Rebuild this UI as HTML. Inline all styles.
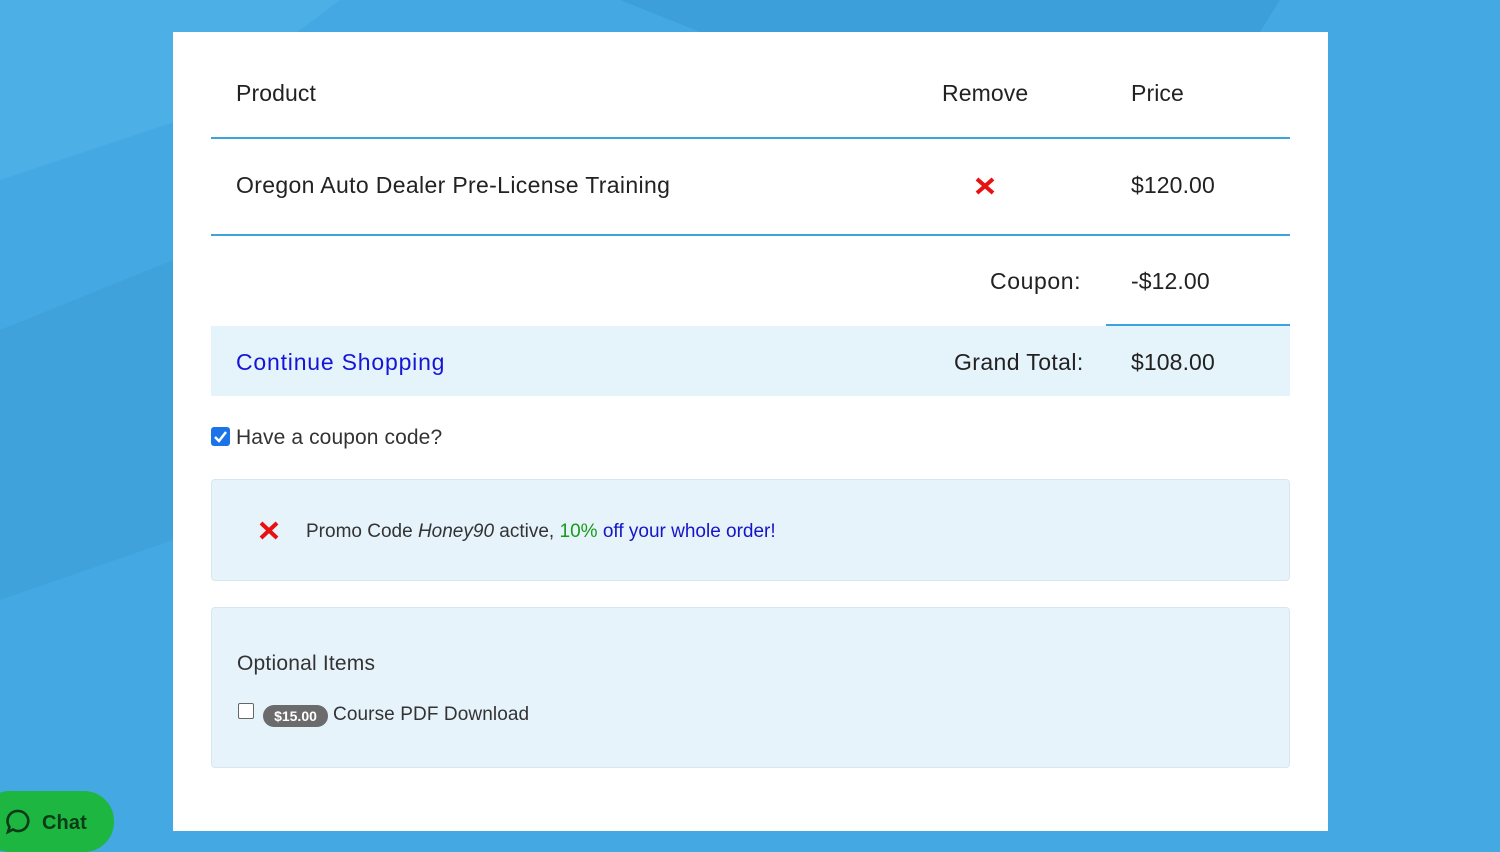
<!DOCTYPE html>
<html><head><style>
body{margin:0;width:1500px;height:852px;overflow:hidden;background:#44a9e2;font-family:"Liberation Sans",sans-serif;position:relative}
.bg{position:absolute;inset:0}
.card{position:absolute;left:173px;top:32px;width:1155px;height:799px;background:#fff}
.t{position:absolute;font-size:23px;color:#222;white-space:nowrap;letter-spacing:0.1px}
.line{position:absolute;height:2px;background:#3aa4dc}
.box{position:absolute;background:#e6f3fb;border:1px solid #d7e6ef;border-radius:4px}
</style></head><body>
<svg class="bg" width="1500" height="852">
<polygon points="0,0 340,0 180,120 0,180" fill="#4cb0e6"/>
<polygon points="0,330 173,260 173,540 0,600" fill="#3fa2db"/>
<polygon points="620,0 1280,0 1260,32 700,32" fill="#3c9fda"/>
</svg>
<div class="card"></div>
<div class="t" style="left:236px;top:80px">Product</div>
<div class="t" style="left:942px;top:80px">Remove</div>
<div class="t" style="left:1131px;top:80px">Price</div>
<div class="line" style="left:211px;top:137px;width:1079px"></div>
<div class="t" style="left:236px;top:172px;letter-spacing:0.35px">Oregon Auto Dealer Pre-License Training</div>
<svg style="position:absolute;left:975px;top:177px" width="20" height="18"><path d="M2 2L18 16M18 2L2 16" stroke="#e81010" stroke-width="4"/></svg>
<div class="t" style="left:1131px;top:172px">$120.00</div>
<div class="line" style="left:211px;top:234px;width:1079px"></div>
<div class="t" style="left:990px;top:268px;letter-spacing:0.6px">Coupon:</div>
<div class="t" style="left:1131px;top:268px">-$12.00</div>
<div style="position:absolute;left:211px;top:326px;width:1079px;height:70px;background:#e5f3fb"></div>
<div class="line" style="left:1106px;top:324px;width:184px"></div>
<div class="t" style="left:236px;top:349px;color:#1515d8;letter-spacing:0.8px">Continue Shopping</div>
<div class="t" style="left:954px;top:349px;letter-spacing:0.4px">Grand Total:</div>
<div class="t" style="left:1131px;top:349px">$108.00</div>
<div style="position:absolute;left:211px;top:427px;width:19px;height:19px;background:#1a73e8;border-radius:3px"><svg width="19" height="19"><path d="M4 10l4 4 7-9" stroke="#fff" stroke-width="2.5" fill="none"/></svg></div>
<div class="t" style="left:236px;top:426px;font-size:21px;color:#333;letter-spacing:0.1px">Have a coupon code?</div>
<div class="box" style="left:211px;top:479px;width:1077px;height:100px"></div>
<svg style="position:absolute;left:259px;top:521px" width="20" height="19"><path d="M2 2L18 17M18 2L2 17" stroke="#e81010" stroke-width="4"/></svg>
<div class="t" style="left:306px;top:521px;font-size:19px;color:#333;letter-spacing:0px">Promo Code <i>Honey90</i> active, <span style="color:#1a9a1a">10%</span> <span style="color:#1515c8">off your whole order!</span></div>
<div class="box" style="left:211px;top:607px;width:1077px;height:159px"></div>
<div class="t" style="left:237px;top:652px;font-size:21px;color:#333;letter-spacing:0.2px">Optional Items</div>
<div style="position:absolute;left:238px;top:703px;width:14px;height:14px;border:1px solid #666;border-radius:2px;background:#fff"></div>
<div style="position:absolute;left:263px;top:705px;width:65px;height:22px;background:#6b6b6b;border-radius:11px;color:#fff;font-size:14px;font-weight:bold;text-align:center;line-height:22px">$15.00</div>
<div class="t" style="left:333px;top:704px;font-size:19px;color:#333">Course PDF Download</div>
<div style="position:absolute;left:-20px;top:791px;width:134px;height:61px;background:#1db640;border-radius:30px"></div>
<svg style="position:absolute;left:4px;top:808px" width="28" height="28"><path d="M14 3a10 10 0 1 1-5 18.5L4 24l1.5-5A10 10 0 0 1 14 3z" fill="none" stroke="#0d3b18" stroke-width="2.6"/></svg>
<div class="t" style="left:42px;top:812px;font-size:20px;font-weight:bold;color:#0d3b18">Chat</div>
</body></html>
